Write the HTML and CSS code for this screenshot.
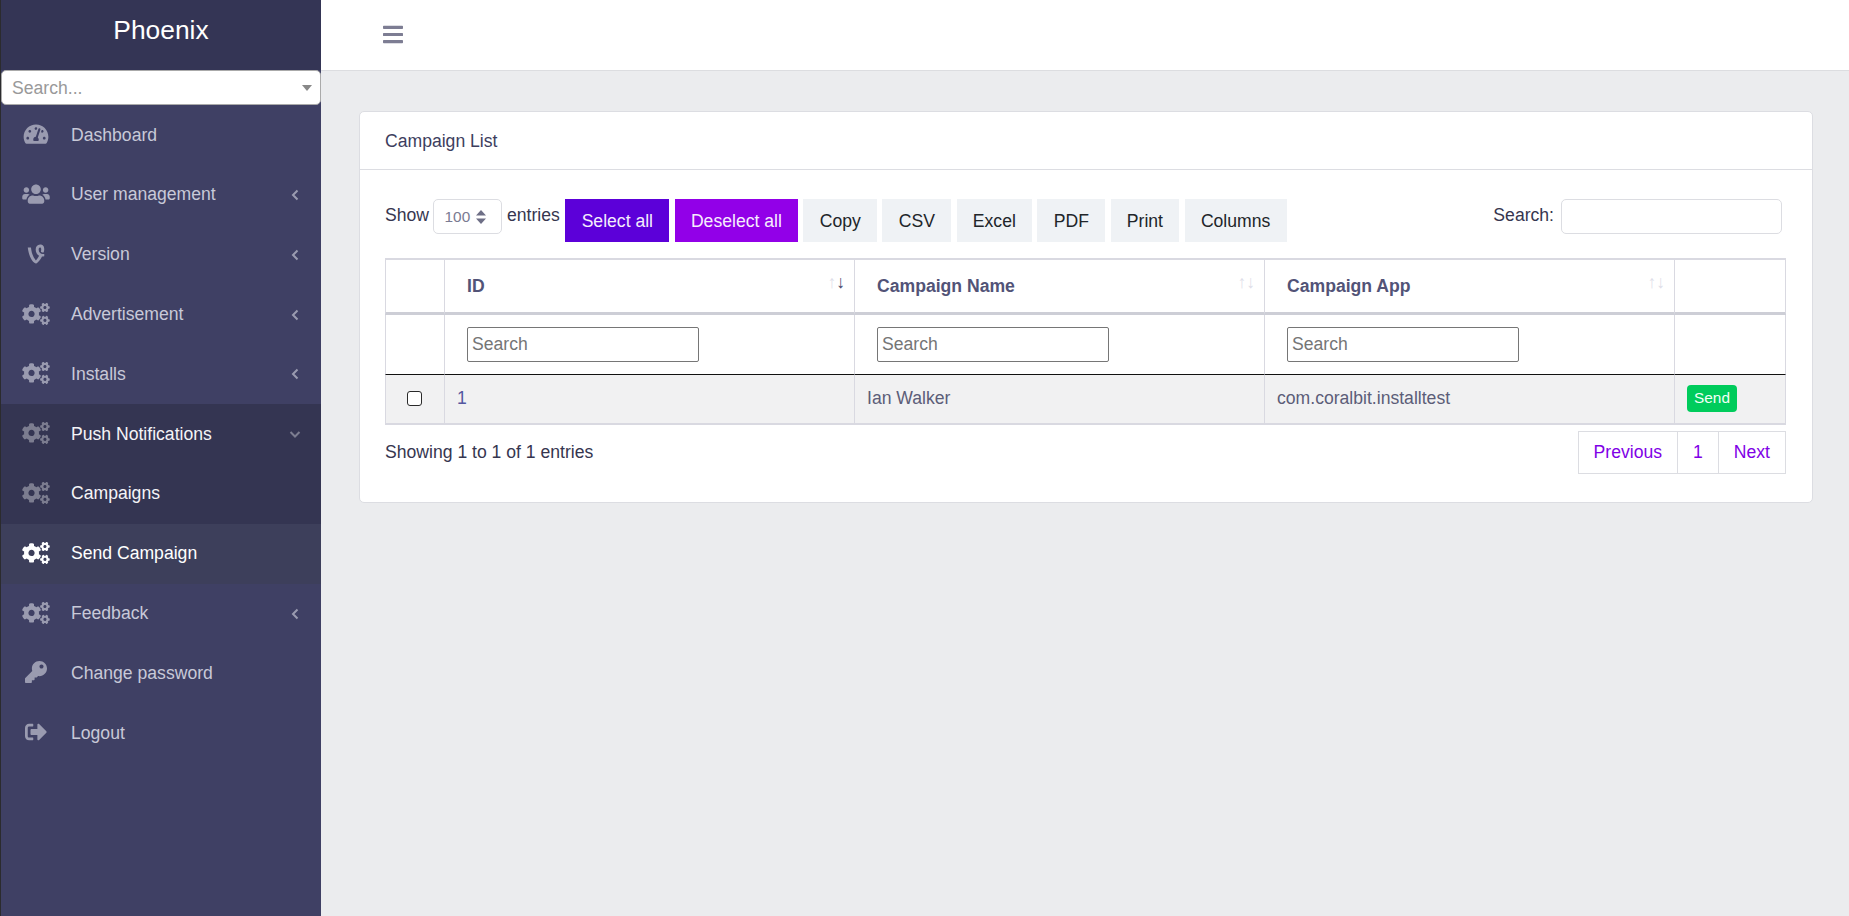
FILE: index.html

```html
<!DOCTYPE html>
<html lang="en">
<head>
  <meta charset="UTF-8" />
  <meta name="viewport" content="width=device-width, initial-scale=1.0"/>
  <title>Phoenix</title>
  <link rel="stylesheet" href="styles.css">
</head>
<body>

<!-- Icon sprites -->
<svg class="sprites" xmlns="http://www.w3.org/2000/svg">
  <symbol id="i-gauge" viewBox="0 0 576 512"><path d="M288 32C128.94 32 0 160.94 0 320c0 52.8 14.25 102.26 39.06 144.8 5.61 9.62 16.3 15.2 27.44 15.2h443c11.14 0 21.83-5.58 27.44-15.2C561.75 422.26 576 372.8 576 320c0-159.06-128.94-288-288-288zm0 64c14.71 0 26.58 10.13 30.32 23.65-1.11 2.26-2.64 4.23-3.45 6.67l-9.22 27.67c-5.13 3.49-10.97 6.01-17.64 6.01-17.67 0-32-14.33-32-32S270.33 96 288 96zM96 384c-17.67 0-32-14.33-32-32s14.33-32 32-32 32 14.33 32 32-14.33 32-32 32zm48-160c-17.67 0-32-14.33-32-32s14.33-32 32-32 32 14.33 32 32-14.33 32-32 32zm246.77-72.41l-61.33 184C343.13 347.33 352 364.54 352 384c0 11.72-3.38 22.55-8.88 32H232.88c-5.5-9.45-8.88-20.28-8.88-32 0-33.94 26.5-61.43 59.9-63.59l61.34-184.01c4.17-12.56 17.73-19.45 30.36-15.17 12.57 4.19 19.35 17.79 15.17 30.36zm14.66 57.2l15.52-46.55c3.47-1.29 7.13-2.23 11.05-2.23 17.67 0 32 14.33 32 32s-14.33 32-32 32c-11.38-.01-20.89-6.28-26.57-15.22zM480 384c-17.67 0-32-14.33-32-32s14.33-32 32-32 32 14.33 32 32-14.33 32-32 32z"/></symbol>
  <symbol id="i-users" viewBox="0 0 640 512"><path d="M96 224c35.3 0 64-28.7 64-64s-28.7-64-64-64-64 28.7-64 64 28.7 64 64 64zm448 0c35.3 0 64-28.7 64-64s-28.7-64-64-64-64 28.7-64 64 28.7 64 64 64zm32 32h-64c-17.6 0-33.5 7.1-45.1 18.6 40.3 22.1 68.9 62 75.1 109.4h66c17.7 0 32-14.3 32-32v-32c0-35.3-28.7-64-64-64zm-256 0c61.9 0 112-50.1 112-112S381.9 32 320 32 208 82.1 208 144s50.1 112 112 112zm76.8 32h-8.3c-20.8 10-43.9 16-68.5 16s-47.6-6-68.5-16h-8.3C179.6 288 128 339.6 128 403.2V432c0 26.5 21.5 48 48 48h288c26.5 0 48-21.5 48-48v-28.8c0-63.6-51.6-115.2-115.2-115.2zm-223.7-13.4C161.5 263.1 145.6 256 128 256H64c-35.3 0-64 28.7-64 64v32c0 17.7 14.3 32 32 32h65.9c6.3-47.4 34.9-87.3 75.2-109.4z"/></symbol>
  <symbol id="i-vine" viewBox="0 0 384 512"><path d="M384 254.7v52.1c-18.4 4.2-36.9 6.1-52.1 6.1-36.9 77.4-103 143.8-125.1 156.2-14 7.9-27.1 8.4-42.7-.8C137 452 34.2 367.7 0 102.7h74.5C93.2 261.8 139 343.4 189.3 404.5c27.9-27.9 54.8-65.1 75.6-106.9-49.8-25.3-80.1-80.9-80.1-145.8 0-65.6 37.7-115.1 102.2-115.1 114.9 0 106.2 127.9 81.6 181.5 0 0-46.4 9.2-63.5-20.5 3.4-11.3 8.2-30.8 8.2-48.5 0-31.3-11.3-46.6-28.4-46.6-18.2 0-30.8 17.1-30.8 50 .1 79.2 59.4 118.7 129.9 101.9z"/></symbol>
  <symbol id="i-cogs" viewBox="0 0 640 512"><path d="M512.1 191l-8.2 14.3c-3 5.3-9.4 7.5-15.1 5.4-11.8-4.4-22.6-10.7-32.1-18.6-4.6-3.8-5.8-10.5-2.8-15.7l8.2-14.3c-6.9-8-12.3-17.3-15.9-27.4h-16.5c-6 0-11.2-4.3-12.2-10.3-2-12-2.1-24.6 0-37.1 1-6 6.2-10.4 12.2-10.4h16.5c3.6-10.1 9-19.4 15.9-27.4l-8.2-14.3c-3-5.2-1.9-11.9 2.8-15.7 9.5-7.9 20.4-14.2 32.1-18.6 5.7-2.1 12.1.1 15.1 5.4l8.2 14.3c10.5-1.9 21.2-1.9 31.7 0L552 6.3c3-5.3 9.4-7.5 15.1-5.4 11.8 4.4 22.6 10.7 32.1 18.6 4.6 3.8 5.8 10.5 2.8 15.7l-8.2 14.3c6.9 8 12.3 17.3 15.9 27.4h16.5c6 0 11.2 4.3 12.2 10.3 2 12 2.1 24.6 0 37.1-1 6-6.2 10.4-12.2 10.4h-16.5c-3.6 10.1-9 19.4-15.9 27.4l8.2 14.3c3 5.2 1.9 11.9-2.8 15.7-9.5 7.9-20.4 14.2-32.1 18.6-5.7 2.1-12.1-.1-15.1-5.4l-8.2-14.3c-10.4 1.9-21.2 1.9-31.7 0zm-10.5-58.8c38.5 29.6 82.4-14.3 52.8-52.8-38.5-29.7-82.4 14.3-52.8 52.8zM386.3 286.1l33.7 16.8c10.1 5.8 14.5 18.1 10.5 29.1-8.9 24.2-26.4 46.4-42.6 65.8-7.4 8.9-20.2 11.1-30.3 5.3l-29.1-16.8c-16 13.7-34.6 24.6-54.9 31.7v33.6c0 11.6-8.3 21.6-19.7 23.6-24.6 4.2-50.4 4.4-75.9 0-11.5-2-20-11.9-20-23.6V418c-20.3-7.2-38.9-18-54.9-31.7L74 403c-10 5.8-22.9 3.6-30.3-5.3-16.2-19.4-33.3-41.6-42.2-65.7-4-10.9.4-23.2 10.5-29.1l33.3-16.8c-3.9-20.9-3.9-42.4 0-63.4L12 205.8c-10.1-5.8-14.6-18.1-10.5-29 8.9-24.2 26-46.4 42.2-65.8 7.4-8.9 20.2-11.1 30.3-5.3l29.1 16.8c16-13.7 34.6-24.6 54.9-31.7V57.1c0-11.5 8.2-21.5 19.6-23.5 24.6-4.2 50.5-4.4 76-.1 11.5 2 20 11.9 20 23.6v33.6c20.3 7.2 38.9 18 54.9 31.7l29.1-16.8c10-5.8 22.9-3.6 30.3 5.3 16.2 19.4 33.2 41.6 42.1 65.8 4 10.9.1 23.2-10 29.1l-33.7 16.8c3.9 21 3.9 42.5 0 63.5zm-117.6 21.1c59.2-77-28.7-164.9-105.7-105.7-59.2 77 28.7 164.9 105.7 105.7zm243.4 182.7l-8.2 14.3c-3 5.3-9.4 7.5-15.1 5.4-11.8-4.4-22.6-10.7-32.1-18.6-4.6-3.8-5.8-10.5-2.8-15.7l8.2-14.3c-6.9-8-12.3-17.3-15.9-27.4h-16.5c-6 0-11.2-4.3-12.2-10.3-2-12-2.1-24.6 0-37.1 1-6 6.2-10.4 12.2-10.4h16.5c3.6-10.1 9-19.4 15.9-27.4l-8.2-14.3c-3-5.2-1.9-11.9 2.8-15.7 9.5-7.9 20.4-14.2 32.1-18.6 5.7-2.1 12.1.1 15.1 5.4l8.2 14.3c10.5-1.9 21.2-1.9 31.7 0l8.2-14.3c3-5.3 9.4-7.5 15.1-5.4 11.8 4.4 22.6 10.7 32.1 18.6 4.6 3.8 5.8 10.5 2.8 15.7l-8.2 14.3c6.9 8 12.3 17.3 15.9 27.4h16.5c6 0 11.2 4.3 12.2 10.3 2 12 2.1 24.6 0 37.1-1 6-6.2 10.4-12.2 10.4h-16.5c-3.6 10.1-9 19.4-15.9 27.4l8.2 14.3c3 5.2 1.9 11.9-2.8 15.7-9.5 7.9-20.4 14.2-32.1 18.6-5.7 2.1-12.1-.1-15.1-5.4l-8.2-14.3c-10.4 1.9-21.2 1.9-31.7 0zM501.6 431c38.5 29.6 82.4-14.3 52.8-52.8-38.5-29.6-82.4 14.3-52.8 52.8z"/></symbol>
  <symbol id="i-key" viewBox="0 0 512 512"><path d="M512 176.001C512 273.203 433.202 352 336 352c-11.22 0-22.19-1.062-32.827-3.069l-24.012 27.014A23.999 23.999 0 0 1 261.223 384H224v40c0 13.255-10.745 24-24 24h-40v40c0 13.255-10.745 24-24 24H24c-13.255 0-24-10.745-24-24v-78.059c0-6.365 2.529-12.47 7.029-16.971l161.802-161.802C163.108 213.814 160 195.271 160 176 160 78.798 238.797.001 335.999 0 433.488-.001 512 78.511 512 176.001zM336 128c0 26.51 21.49 48 48 48s48-21.49 48-48-21.49-48-48-48-48 21.49-48 48z"/></symbol>
  <symbol id="i-logout" viewBox="0 0 512 512"><path d="M497 273L329 441c-15 15-41 4.5-41-17v-96H152c-13.3 0-24-10.7-24-24v-96c0-13.3 10.7-24 24-24h136V88c0-21.4 25.9-32 41-17l168 168c9.3 9.4 9.3 24.6 0 34zM192 436v-40c0-6.6-5.4-12-12-12H96c-17.7 0-32-14.3-32-32V160c0-17.7 14.3-32 32-32h84c6.6 0 12-5.4 12-12V76c0-6.6-5.4-12-12-12H96c-53 0-96 43-96 96v192c0 53 43 96 96 96h84c6.6 0 12-5.4 12-12z"/></symbol>
  <symbol id="i-left" viewBox="0 0 10 14"><path d="M7.5 2.5 L3 7 L7.5 11.5" fill="none" stroke="currentColor" stroke-width="2"/></symbol>
  <symbol id="i-down" viewBox="0 0 14 10"><path d="M2.5 3 L7 7.5 L11.5 3" fill="none" stroke="currentColor" stroke-width="2"/></symbol>
</svg>

<div class="app">

  <!-- Sidebar -->
  <aside class="sidebar">
    <div class="brand">Phoenix</div>
    <div class="side-search">
      <input type="text" placeholder="Search..." />
      <span class="side-caret"></span>
    </div>
    <ul class="menu">
      <li><a href="#"><svg class="ico"><use href="#i-gauge"/></svg><span>Dashboard</span></a></li>
      <li><a href="#"><svg class="ico"><use href="#i-users"/></svg><span>User management</span><svg class="arrow"><use href="#i-left"/></svg></a></li>
      <li><a href="#"><svg class="ico"><use href="#i-vine"/></svg><span>Version</span><svg class="arrow"><use href="#i-left"/></svg></a></li>
      <li><a href="#"><svg class="ico"><use href="#i-cogs"/></svg><span>Advertisement</span><svg class="arrow"><use href="#i-left"/></svg></a></li>
      <li><a href="#"><svg class="ico"><use href="#i-cogs"/></svg><span>Installs</span><svg class="arrow"><use href="#i-left"/></svg></a></li>
      <li class="open"><a href="#"><svg class="ico"><use href="#i-cogs"/></svg><span>Push Notifications</span><svg class="arrow"><use href="#i-down"/></svg></a></li>
      <li class="open"><a href="#"><svg class="ico"><use href="#i-cogs"/></svg><span>Campaigns</span></a></li>
      <li class="current"><a href="#"><svg class="ico"><use href="#i-cogs"/></svg><span>Send Campaign</span></a></li>
      <li><a href="#"><svg class="ico"><use href="#i-cogs"/></svg><span>Feedback</span><svg class="arrow"><use href="#i-left"/></svg></a></li>
      <li><a href="#"><svg class="ico"><use href="#i-key"/></svg><span>Change password</span></a></li>
      <li><a href="#"><svg class="ico"><use href="#i-logout"/></svg><span>Logout</span></a></li>
    </ul>
  </aside>

  <!-- Main -->
  <div class="main">
    <header class="topbar">
      <svg class="bars" viewBox="0 0 448 512"><path d="M16 132h416c8.837 0 16-7.163 16-16V76c0-8.837-7.163-16-16-16H16C7.163 60 0 67.163 0 76v40c0 8.837 7.163 16 16 16zm0 160h416c8.837 0 16-7.163 16-16v-40c0-8.837-7.163-16-16-16H16c-8.837 0-16 7.163-16 16v40c0 8.837 7.163 16 16 16zm0 160h416c8.837 0 16-7.163 16-16v-40c0-8.837-7.163-16-16-16H16c-8.837 0-16 7.163-16 16v40c0 8.837 7.163 16 16 16z"/></svg>
    </header>

    <div class="content">
      <div class="card">
        <div class="card-header">Campaign List</div>
        <div class="card-body">

          <div class="toolbar">
            <label class="length">Show
              <span class="select-wrap">
                <select><option>100</option></select>
                <svg class="select-caret" viewBox="0 0 10 14"><path d="M5 0 L10 5.5 H0 Z M5 14 L0 8.5 H10 Z"/></svg>
              </span>
              entries</label>
            <div class="buttons">
              <button class="btn btn-select">Select all</button>
              <button class="btn btn-deselect">Deselect all</button>
              <button class="btn">Copy</button>
              <button class="btn">CSV</button>
              <button class="btn">Excel</button>
              <button class="btn">PDF</button>
              <button class="btn">Print</button>
              <button class="btn">Columns</button>
            </div>
            <label class="filter">Search: <input type="search" /></label>
          </div>

          <table class="data">
            <colgroup>
              <col class="c-check"><col class="c-text"><col class="c-text"><col class="c-text"><col class="c-action">
            </colgroup>
            <thead>
              <tr class="head">
                <th></th>
                <th>ID<span class="sort"><i>↑</i><i class="on">↓</i></span></th>
                <th>Campaign Name<span class="sort"><i>↑</i><i>↓</i></span></th>
                <th>Campaign App<span class="sort"><i>↑</i><i>↓</i></span></th>
                <th></th>
              </tr>
              <tr class="filters">
                <td></td>
                <td><input type="text" placeholder="Search" /></td>
                <td><input type="text" placeholder="Search" /></td>
                <td><input type="text" placeholder="Search" /></td>
                <td></td>
              </tr>
            </thead>
            <tbody>
              <tr class="row">
                <td class="check"><input type="checkbox" /></td>
                <td class="id">1</td>
                <td>Ian Walker</td>
                <td>com.coralbit.installtest</td>
                <td><button class="send">Send</button></td>
              </tr>
            </tbody>
          </table>

          <div class="table-foot">
            <div class="info">Showing 1 to 1 of 1 entries</div>
            <ul class="pager">
              <li><a href="#">Previous</a></li>
              <li><a href="#">1</a></li>
              <li><a href="#">Next</a></li>
            </ul>
          </div>

        </div>
      </div>
    </div>
  </div>

</div>

</body>
</html>
```

FILE: styles.css

```css
* { margin: 0; padding: 0; box-sizing: border-box; }

html, body {
  height: 100%;
  overflow: hidden;
  font-family: "Liberation Sans", Arial, sans-serif;
  font-size: 17.6px;
  color: #36364f;
  background: #ebecee;
}

.sprites { display: none; }

.app {
  display: flex;
  height: 100%;
}

/* SIDEBAR */
.sidebar {
  width: 321px;
  flex-shrink: 0;
  background: #3f4064;
  border-left: 1px solid #2b2b2e;
}

.brand {
  height: 70px;
  padding-top: 14px;
  background: #343555;
  color: #fff;
  font-size: 26.4px;
  line-height: 32px;
  text-align: center;
}

.side-search {
  position: relative;
  height: 35px;
}

.side-search input {
  width: 100%;
  height: 100%;
  padding: 2px 10px 0;
  border: 1px solid #aaa;
  border-radius: 5px;
  background: #fff;
  font: inherit;
  outline: none;
}

.side-search input::placeholder { color: #999; }

.side-caret {
  position: absolute;
  right: 9px;
  top: 15px;
  border-left: 5px solid transparent;
  border-right: 5px solid transparent;
  border-top: 6px solid #888;
}

.menu {
  list-style: none;
  padding-top: 0.3px;
}

.menu li { height: 59.8px; }

.menu a {
  display: flex;
  align-items: center;
  height: 100%;
  padding-left: 21px;
  color: #c8c9d8;
  text-decoration: none;
}

.menu .ico {
  width: 28px;
  height: 22px;
  margin: -2px 21px 0 0;
  fill: #9a9bb0;
  flex-shrink: 0;
}

.menu .arrow {
  width: 10px;
  height: 14px;
  margin-left: auto;
  margin-right: 21px;
  color: #9a9bb0;
}

.menu .open { background: #343552; }
.menu .open a { color: #f4f4f7; }
.menu .open .ico { fill: #7c7d90; }
.menu .open .arrow { width: 14px; height: 10px; margin-right: 19px; color: #7c7d90; }

.menu .current { background: #3d3f5b; }
.menu .current a { color: #fff; }
.menu .current .ico { fill: #fff; }

/* TOPBAR */
.main {
  flex: 1;
  min-width: 0;
}

.topbar {
  display: flex;
  align-items: center;
  height: 71px;
  padding: 0 0 2px 62px;
  background: #fff;
  border-bottom: 1px solid #dcdde0;
}

.bars {
  width: 20px;
  height: 23px;
  fill: #7d7d93;
}

/* CARD */
.content { padding: 40px 36px 0 38px; }

.card {
  background: #fff;
  border: 1px solid #dcdde2;
  border-radius: 5px;
}

.card-header {
  height: 58px;
  padding: 0 25px;
  line-height: 59px;
  border-bottom: 1px solid #dcdde2;
  color: #3d3e5e;
}

.card-body { padding: 29px 26px 28px 25px; }

/* TOOLBAR */
.toolbar {
  display: flex;
  align-items: flex-start;
  margin-bottom: 16px;
}

.length {
  display: flex;
  align-items: flex-start;
  gap: 4.5px;
  line-height: 32px;
  height: 35px;
  margin-right: 5.5px;
}

.select-wrap {
  position: relative;
  display: block;
  margin: 0 1px 0 -1px;
}

.select-wrap select {
  display: block;
  width: 69px;
  height: 35px;
  padding-left: 11px;
  border: 1px solid #dcdde2;
  border-radius: 5px;
  background: #fff;
  color: #7a7b92;
  font: inherit;
  font-size: 15.4px;
  appearance: none;
  outline: none;
}

.select-caret {
  position: absolute;
  right: 16px;
  top: 11px;
  width: 10px;
  height: 14px;
  fill: #6e6f86;
}

.buttons {
  display: flex;
  gap: 5.3px;
}

.btn {
  height: 43px;
  padding: 2px 16.3px 0;
  border: none;
  background: #eff2f5;
  color: #212529;
  font: inherit;
}

.btn-select { background: #5c00d9; color: #f4eefc; }
.btn-deselect { background: #9200e8; color: #f6edfd; }

.filter {
  display: flex;
  align-items: flex-start;
  gap: 7px;
  line-height: 32px;
  height: 35px;
  margin-left: auto;
  margin-right: 4px;
}

.filter input {
  width: 221px;
  height: 35px;
  border: 1px solid #dcdde2;
  border-radius: 5px;
  outline: none;
}

/* TABLE */
.data {
  width: 1401px;
  table-layout: fixed;
  border-collapse: separate;
  border-spacing: 0;
}

.c-check { width: 60px; }
.c-text { width: 410px; }
.c-action { width: 111px; }

.data th, .data td {
  border-right: 1px solid #d9d9e1;
  text-align: left;
  font-weight: normal;
}

.data th:first-child, .data td:first-child { border-left: 1px solid #d9d9e1; }

.head th {
  position: relative;
  height: 57px;
  padding-left: 22px;
  border-top: 2px solid #d9d9e1;
  border-bottom: 3px solid #cdced6;
  color: #525377;
  font-weight: bold;
}

.sort {
  position: absolute;
  right: 9px;
  top: 12px;
  display: flex;
  font-size: 17.6px;
  font-weight: normal;
  line-height: 20px;
}

.sort i {
  width: 8.8px;
  font-style: normal;
  text-align: center;
  color: #dfdfea;
}

.sort i.on { color: #4e4f73; }

.filters td {
  height: 60px;
  padding-left: 22px;
  border-bottom: 1px solid #111;
}

.filters input {
  width: 232px;
  height: 35px;
  padding: 0 4px;
  font: inherit;
  border: 1px solid #767676;
  border-radius: 2px;
  outline: none;
}

.row td {
  height: 50px;
  padding: 0 0 2px 12px;
  background: #f1f1f2;
  border-bottom: 2px solid #d9d9e1;
  color: #5c5d78;
}

.row td.check {
  padding: 0 2px 2px 0;
  text-align: center;
}

.check input {
  display: block;
  width: 15px;
  height: 15px;
  margin: 0 auto;
  border: 1px solid #2a2a2a;
  border-radius: 3px;
  background: #fff;
  appearance: none;
}

.row td.id { color: #5457a0; }

.send {
  display: block;
  width: 50px;
  height: 27px;
  border: none;
  border-radius: 4px;
  background: #00cc5c;
  color: #f2fff7;
  font: inherit;
  font-size: 15.4px;
}

/* FOOT */
.table-foot {
  display: flex;
  align-items: center;
  justify-content: space-between;
  margin-top: 6px;
}

.pager {
  display: flex;
  list-style: none;
  height: 43px;
  border: 1px solid #dcdde2;
}

.pager li + li { border-left: 1px solid #dcdde2; }

.pager a {
  display: block;
  padding: 0 15px;
  line-height: 41px;
  color: #8000e6;
  text-decoration: none;
}
```
